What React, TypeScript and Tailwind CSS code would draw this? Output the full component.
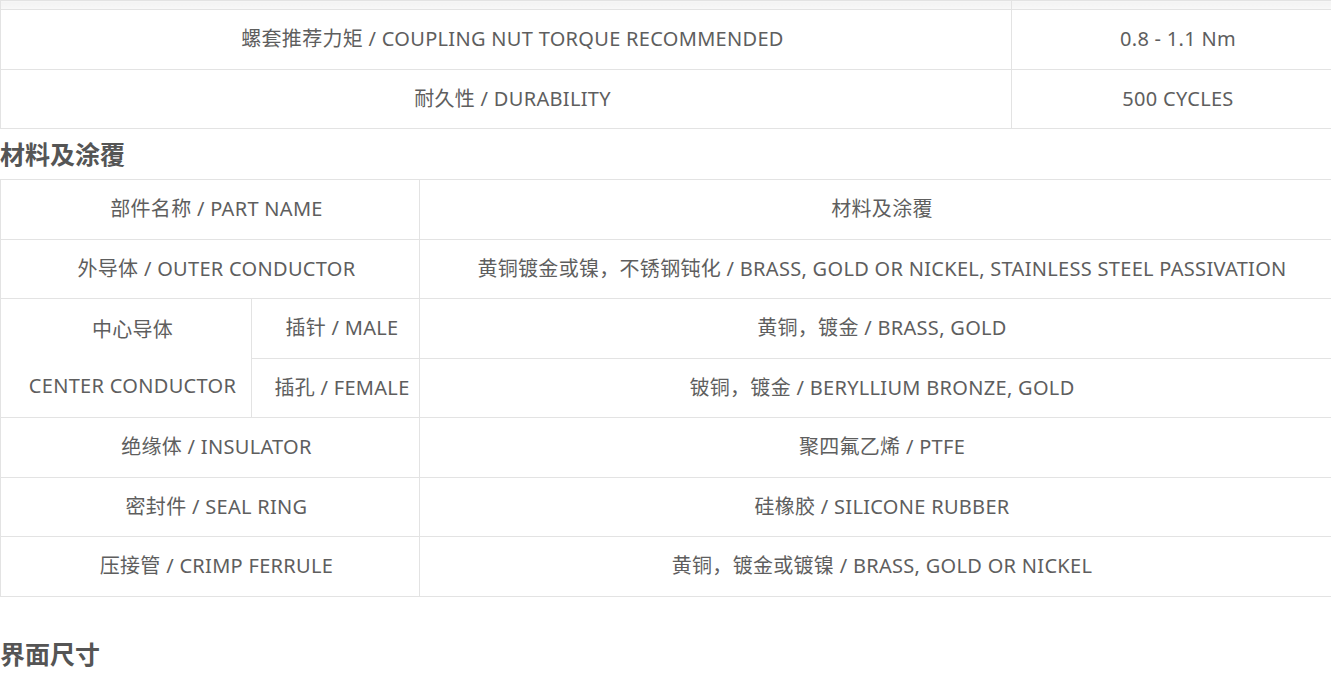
const font = { fontFamily: '"Noto Sans", "Noto Sans CJK SC", sans-serif' };

const cell = "border border-[#e3e3e3] text-center align-middle h-[59.5px] p-0 pl-[13px]";

const rest = [
  { part: "绝缘体 / INSULATOR", mat: "聚四氟乙烯 / PTFE" },
  { part: "密封件 / SEAL RING", mat: "硅橡胶 / SILICONE RUBBER" },
  { part: "压接管 / CRIMP FERRULE", mat: "黄铜，镀金或镀镍 / BRASS, GOLD OR NICKEL" },
];

export default function App() {
  return (
    <div className="w-full overflow-hidden bg-white text-[20px] tracking-[0.3px] text-[#5e5e5e]" style={font}>
      <div className="w-[1332px]">
        <table className="w-full border-collapse table-fixed">
          <colgroup>
            <col className="w-[1011px]" />
            <col />
          </colgroup>
          <tbody>
            <tr>
              <td className="border border-[#e3e3e3] h-[9px] p-0 bg-gradient-to-b from-[#f3f3f3] to-[#f8f8f8]" />
              <td className="border border-[#e3e3e3] h-[9px] p-0 bg-gradient-to-b from-[#f3f3f3] to-[#f8f8f8]" />
            </tr>
            <tr>
              <td className={cell}>螺套推荐力矩 / COUPLING NUT TORQUE RECOMMENDED</td>
              <td className={cell}>0.8 - 1.1 Nm</td>
            </tr>
            <tr>
              <td className={cell}>耐久性 / DURABILITY</td>
              <td className={cell}>500 CYCLES</td>
            </tr>
          </tbody>
        </table>

        <h3 className="text-[25px] font-bold tracking-normal text-[#555] leading-[50px]">材料及涂覆</h3>

        <table className="w-full border-collapse table-fixed">
          <colgroup>
            <col className="w-[251px]" />
            <col className="w-[168px]" />
            <col />
          </colgroup>
          <tbody>
            <tr>
              <td colSpan={2} className={cell}>部件名称 / PART NAME</td>
              <td className={cell}>材料及涂覆</td>
            </tr>
            <tr>
              <td colSpan={2} className={cell}>外导体 / OUTER CONDUCTOR</td>
              <td className={cell}>黄铜镀金或镍，不锈钢钝化 / BRASS, GOLD OR NICKEL, STAINLESS STEEL PASSIVATION</td>
            </tr>
            <tr>
              <td rowSpan={2} className={cell + " leading-[56px]"}>
                <div>中心导体</div>
                <div>CENTER CONDUCTOR</div>
              </td>
              <td className={cell}>插针 / MALE</td>
              <td className={cell}>黄铜，镀金 / BRASS, GOLD</td>
            </tr>
            <tr>
              <td className={cell}>插孔 / FEMALE</td>
              <td className={cell}>铍铜，镀金 / BERYLLIUM BRONZE, GOLD</td>
            </tr>
            {rest.map((m, i) => (
              <tr key={i}>
                <td colSpan={2} className={cell}>{m.part}</td>
                <td className={cell}>{m.mat}</td>
              </tr>
            ))}
          </tbody>
        </table>

        <h3 className="text-[25px] font-bold tracking-normal text-[#555] mt-[42px] leading-[30px]">界面尺寸</h3>
      </div>
    </div>
  );
}
